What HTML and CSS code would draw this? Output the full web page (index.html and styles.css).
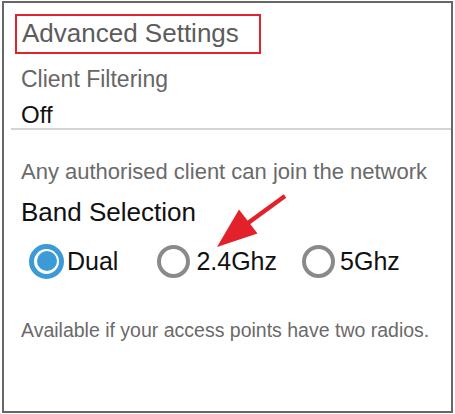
FILE: index.html
```html
<!DOCTYPE html>
<html>
<head>
<meta charset="utf-8">
<link rel="stylesheet" href="styles.css">
</head>
<body>
<div class="card">
  <div class="title-box"><span class="title">Advanced Settings</span></div>
  <div class="label">Client Filtering</div>
  <div class="value">Off</div>
  <div class="separator"></div>
  <div class="hint">Any authorised client can join the network</div>
  <div class="section">Band Selection</div>
  <div class="radios">
    <div class="option opt-dual">
      <span class="radio checked"><span class="dot"></span></span>
      <span class="opt-label">Dual</span>
    </div>
    <div class="option opt-24">
      <span class="radio"></span>
      <span class="opt-label">2.4Ghz</span>
    </div>
    <div class="option opt-5">
      <span class="radio"></span>
      <span class="opt-label">5Ghz</span>
    </div>
  </div>
  <div class="note">Available if your access points have two radios.</div>
</div>
<svg class="arrow" width="455" height="414" viewBox="0 0 455 414">
  <line x1="285" y1="196" x2="248" y2="223" stroke="#e3212b" stroke-width="4.5"/>
  <polygon points="217,247 239,209.5 257.5,233.5" fill="#e3212b"/>
</svg>
</body>
</html>
```
FILE: styles.css
```css
html, body {
  margin: 0;
  padding: 0;
  background: #ffffff;
}
body {
  position: relative;
  width: 455px;
  height: 414px;
  font-family: "Liberation Sans", Arial, Helvetica, sans-serif;
}
.card {
  box-sizing: border-box;
  margin: 1px 2px 0 2px;
  width: 451px;
  height: 412px;
  border: 2px solid #676767;
  display: flex;
  flex-direction: column;
}
.title-box {
  box-sizing: border-box;
  margin: 11px 0 0 11px;
  width: 246px;
  height: 40px;
  border: 2px solid #e0232c;
  padding: 0 0 2px 5px;
  line-height: 34px;
}
.title {
  font-size: 26px;
  color: #5c5c5c;
}
.label {
  margin: 10px 0 0 17px;
  font-size: 23px;
  line-height: 30px;
  height: 30px;
  color: #666666;
}
.value {
  margin: 8px 0 0 17px;
  font-size: 24px;
  line-height: 26px;
  height: 26px;
  color: #111111;
}
.separator {
  margin: 0 0 0 7px;
  height: 2px;
  background: #d4d4d4;
}
.hint {
  margin: 28px 0 0 17px;
  font-size: 22px;
  line-height: 28px;
  height: 28px;
  color: #6a6a6a;
}
.section {
  margin: 11px 0 0 17px;
  font-size: 26px;
  line-height: 30px;
  height: 30px;
  color: #111111;
}
.radios {
  margin: 16px 0 0 0;
  padding-left: 25px;
  height: 36px;
  display: flex;
  align-items: center;
}
.option {
  display: flex;
  align-items: center;
}
.opt-label {
  font-size: 25px;
  line-height: 30px;
  color: #111111;
}
.radio {
  box-sizing: border-box;
  width: 33px;
  height: 33px;
  border-radius: 50%;
  border: 4px solid #8a8a8a;
  display: flex;
  align-items: center;
  justify-content: center;
}
.radio.checked {
  width: 35px;
  height: 35px;
  border: 5px solid #3b9bd6;
}
.dot {
  width: 20px;
  height: 20px;
  border-radius: 50%;
  background: #3b9bd6;
}
.opt-dual .opt-label {
  margin-left: 3px;
}
.opt-24 {
  margin-left: 39px;
}
.opt-24 .opt-label {
  margin-left: 6px;
}
.opt-5 {
  margin-left: 25px;
}
.opt-5 .opt-label {
  margin-left: 5px;
}
.note {
  margin: 39px 0 0 17px;
  font-size: 19.5px;
  line-height: 24px;
  height: 24px;
  color: #6a6a6a;
}
.arrow {
  position: absolute;
  top: 0;
  left: 0;
  pointer-events: none;
}
```
